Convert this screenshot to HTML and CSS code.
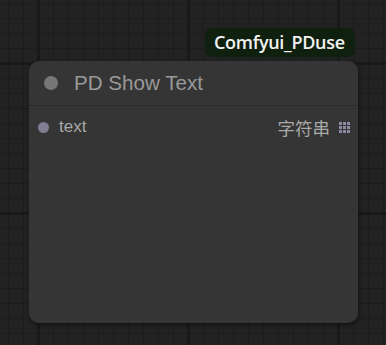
FILE: index.html
```html
<!DOCTYPE html>
<html>
<head>
<meta charset="utf-8">
<link rel="stylesheet" href="styles.css">
</head>
<body>
<div class="canvas">
  <div class="badge">Comfyui_PDuse</div>
  <div class="node">
    <div class="node-title">
      <span class="title-dot"></span>
      <span class="title-text">PD Show Text</span>
    </div>
    <div class="node-body">
      <div class="slot-row">
        <div class="slot-in">
          <span class="in-dot"></span>
          <span class="slot-label">text</span>
        </div>
        <div class="slot-out">
          <span class="slot-label cjk">字符串</span>
          <svg class="grid-icon" width="11" height="11" viewBox="0 0 11 11">
            <rect x="0" y="0" width="3" height="3"/>
            <rect x="4" y="0" width="3" height="3"/>
            <rect x="8" y="0" width="3" height="3"/>
            <rect x="0" y="4" width="3" height="3"/>
            <rect x="4" y="4" width="3" height="3"/>
            <rect x="8" y="4" width="3" height="3"/>
            <rect x="0" y="8" width="3" height="3"/>
            <rect x="4" y="8" width="3" height="3"/>
            <rect x="8" y="8" width="3" height="3"/>
          </svg>
        </div>
      </div>
    </div>
  </div>
</div>
</body>
</html>
```

FILE: styles.css
```css
html, body {
  margin: 0;
  padding: 0;
}
body {
  width: 386px;
  height: 345px;
  overflow: hidden;
  background-color: #222222;
  font-family: "Liberation Sans", Arial, "Noto Sans CJK SC", sans-serif;
}
.canvas {
  position: relative;
  width: 386px;
  height: 345px;
  background-color: #222222;
  background-image:
    linear-gradient(to right, #191919 0, #191919 3px, transparent 3px),
    linear-gradient(to bottom, #191919 0, #191919 3px, transparent 3px),
    linear-gradient(to right, #1c1c1c 0, #1c1c1c 1px, transparent 1px),
    linear-gradient(to bottom, #1c1c1c 0, #1c1c1c 1px, transparent 1px);
  background-size: 150px 150px, 150px 150px, 15px 15px, 15px 15px;
  background-position: 37px 0, 0 62px, 8px 0, 0 3px;
}
.badge {
  position: absolute;
  left: 205px;
  top: 28px;
  height: 29px;
  padding: 0 0 0 9px;
  box-sizing: border-box;
  width: 150px;
  border-radius: 7px;
  background: #10200f;
  color: #f2f2f2;
  font-family: "Open Sans", sans-serif;
  font-weight: 600;
  font-size: 18px;
  line-height: 29px;
  letter-spacing: -0.3px;
  white-space: nowrap;
}
.node {
  position: absolute;
  left: 29px;
  top: 61px;
  width: 329px;
  height: 262px;
  background: #353535;
  border-radius: 10px;
  box-shadow: 1px 2px 4px rgba(0, 0, 0, 0.45);
  display: flex;
  flex-direction: column;
}
.node-title {
  height: 44px;
  display: flex;
  align-items: center;
  padding-left: 15px;
  border-bottom: 1px solid #2b2b2b;
  gap: 16px;
}
.title-dot {
  width: 14px;
  height: 14px;
  border-radius: 50%;
  background: #777777;
}
.title-text {
  color: #999999;
  font-size: 20.6px;
}
.node-body {
  padding: 8px 8px 0 9px;
}
.slot-row {
  display: flex;
  justify-content: space-between;
  align-items: center;
  height: 26px;
}
.slot-in, .slot-out {
  display: flex;
  align-items: center;
}
.in-dot {
  width: 11px;
  height: 11px;
  border-radius: 50%;
  background: #7f7d92;
  margin-right: 10px;
}
.slot-label {
  color: #a8a8a8;
  font-size: 17px;
}
.slot-label.cjk {
  font-family: "Noto Sans CJK SC", sans-serif;
  font-size: 17.5px;
}
.grid-icon {
  margin-left: 9px;
  fill: #8a8aa2;
}
```
